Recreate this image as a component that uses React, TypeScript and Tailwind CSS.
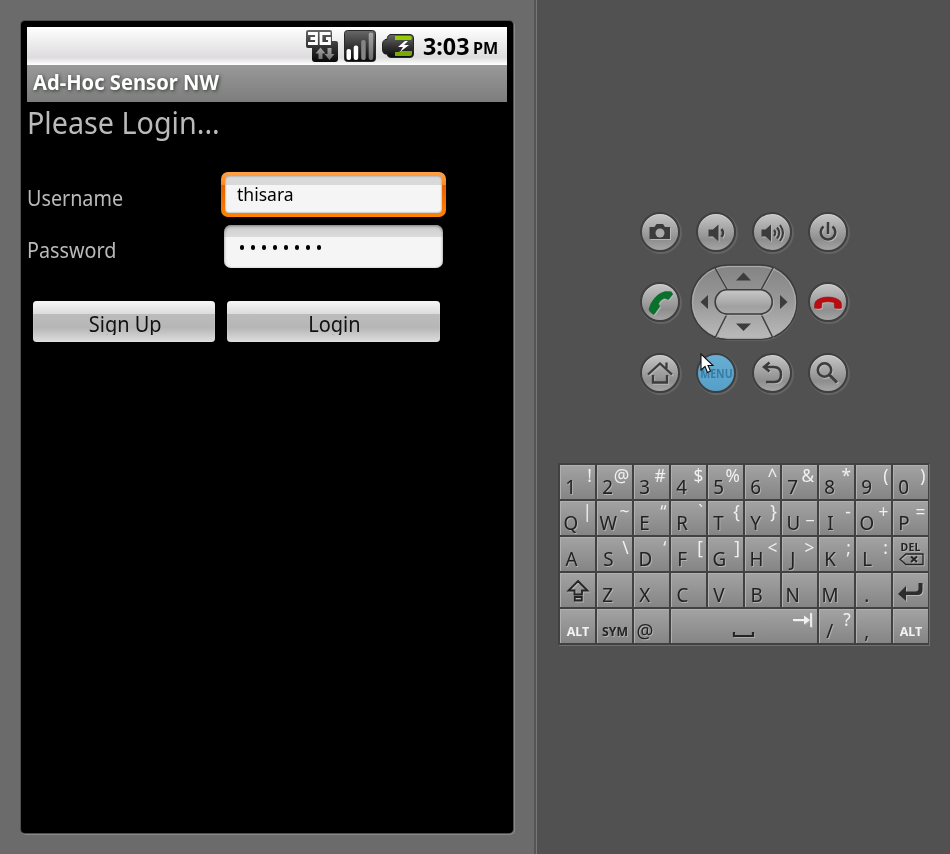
import type { ReactNode } from "react";

const RIGHT_SHADOW = "drop-shadow-[1px_1px_0_#b5b5b5]";

function StatusIcons() {
  return (
    <svg width="110" height="38" viewBox="305 27 110 38" aria-hidden="true">
      <defs>
        <linearGradient id="dark" x1="0" y1="0" x2="0" y2="1">
          <stop offset="0" stopColor="#686868" />
          <stop offset="0.5" stopColor="#353535" />
          <stop offset="1" stopColor="#080808" />
        </linearGradient>
        <linearGradient id="grey" x1="0" y1="0" x2="0" y2="1">
          <stop offset="0" stopColor="#a8a8a8" />
          <stop offset="1" stopColor="#6c6c6c" />
        </linearGradient>
      </defs>
      <path d="M308 30h22q2 0 2 2v9h4q2 0 2 2v16q0 3-3 3h-20q-3 0-3-3v-11h-4q-2 0-2-2v-14q0-2 2-2z" fill="url(#dark)" />
      <path d="M308 33.500h8.500v10h-8.500M310.500 38.500h6M330.500 33.500h-9.500v10h8.500v-5h-3.500" fill="none" stroke="#fff" strokeWidth="2.800" />
      <path d="M320.500 47.500l5 6h-3v5.500h-4v-5.500h-3zM329.500 60l-5-6h3v-6h4v6h3z" fill="url(#grey)" />
      <rect x="344.500" y="30.500" width="31" height="31" rx="3" fill="url(#dark)" stroke="#292929" />
      <rect x="346.500" y="49" width="4.500" height="11" rx="2" fill="#fff" />
      <rect x="353.700" y="45.500" width="4.500" height="14.500" rx="2" fill="#fff" />
      <rect x="361.200" y="40" width="4.500" height="20" rx="2" fill="#858585" />
      <rect x="368.700" y="32.500" width="4.500" height="27.500" rx="2" fill="url(#grey)" />
      <path d="M391 34.500h19q3.500 0 3.500 3.500v16q0 3.500-3.500 3.500h-19q-3.500 0-4-3.500h-2q-2.500-1-2.500-4v-6q0-3 2.500-4.500h2q.5-5 4-5z" fill="url(#dark)" stroke="#252525" />
      <path d="M395 52h3l3-1h11v3q0 2-2 2h-15z" fill="#7ba800" />
      <path d="M395 36h15q2 0 2 2l-1 2h-16z" fill="#93cc00" />
      <path d="M405 41l-7 6h5l-3 5 9-7h-5l4-4z" fill="#fff" />
    </svg>
  );
}

function RoundButton({ label, blue = false, children }: { label: string; blue?: boolean; children: ReactNode }) {
  return (
    <button
      aria-label={label}
      className={`flex size-[40px] items-center justify-center rounded-full border-2 border-[#3f3f3f] pt-px shadow-[1px_1px_0_1px_#646464] ${
        blue ? "bg-linear-to-b from-[#69afd4] to-[#559fc8]" : "bg-linear-to-b from-[#c6c6c6] via-[#8e8e8e] via-72% to-[#a6a6a6] inset-shadow-[0_1px_0_#d5d5d5]"
      }`}
    >
      {children}
    </button>
  );
}

function Glyph({ children }: { children: ReactNode }) {
  return (
    <svg width="36" height="36" viewBox="0 0 36 36" fill="none" stroke="#3c3c3c" strokeWidth="2.500" className="shrink-0 drop-shadow-[1px_1px_0_#b8b8b8]">
      {children}
    </svg>
  );
}

function DPad() {
  return (
    <svg width="110" height="78" viewBox="689 263 110 78" className="-mx-[1px]" aria-label="Directional pad">
      <defs>
        <linearGradient id="pad" x1="0" y1="0" x2="0" y2="1">
          <stop offset="0" stopColor="#838383" />
          <stop offset="0.500" stopColor="#999" />
          <stop offset="1" stopColor="#bbb" />
        </linearGradient>
        <linearGradient id="ok" x1="0" y1="0" x2="0" y2="1">
          <stop offset="0" stopColor="#c8c8c8" />
          <stop offset="0.700" stopColor="#a0a0a0" />
          <stop offset="1" stopColor="#aaa" />
        </linearGradient>
      </defs>
      <rect x="692" y="266" width="106" height="75" rx="37.500" fill="#6d6d6d" />
      <rect x="691" y="265" width="106" height="74.500" rx="37" fill="url(#pad)" stroke="#3c3c3c" strokeWidth="1.600" />
      <rect x="692.600" y="266.600" width="102.800" height="71.300" rx="35.500" fill="none" stroke="#b0b0b0" />
      <path d="M715.500 268l13 22M774.500 268l-12.500 22M716.500 338l12.500-22M773.500 338l-12.500-22" stroke="#b0b0b0" />
      <path d="M714.500 267l13 23M773.500 267l-12.500 23M715 338l12-24M773 338l-12-24" stroke="#404040" strokeWidth="1.500" />
      <rect x="715.500" y="290.300" width="58" height="25" rx="12" fill="none" stroke="#b5b5b5" />
      <rect x="715.200" y="289.800" width="57" height="24.200" rx="12" fill="url(#ok)" stroke="#3c3c3c" strokeWidth="1.600" />
      <path d="M736 280.500h15l-7.500-8zM736 323.500h15l-7.500 7.500zM708 295v14l-7.500-7zM780 295v14l7.500-7z" fill="#3c3c3c" />
    </svg>
  );
}

const ROWS: [string, string][][] = [
  [["1", "!"], ["2", "@"], ["3", "#"], ["4", "$"], ["5", "%"], ["6", "^"], ["7", "&"], ["8", "*"], ["9", "("], ["0", ")"]],
  [["Q", "|"], ["W", "~"], ["E", "“"], ["R", "`"], ["T", "{"], ["Y", "}"], ["U", "_"], ["I", "-"], ["O", "+"], ["P", "="]],
  [["A", ""], ["S", "\\"], ["D", "‘"], ["F", "["], ["G", "]"], ["H", "<"], ["J", ">"], ["K", ";"], ["L", ":"], ["del", ""]],
  [["shift", ""], ["Z", ""], ["X", ""], ["C", ""], ["V", ""], ["B", ""], ["N", ""], ["M", ""], [".", ""], ["enter", ""]],
  [["ALT", ""], ["SYM", ""], ["@", ""], ["space", ""], ["/", "?"], [",", ""], ["ALT", ""]],
];

function KeyFace({ main, alt }: { main: string; alt: string }) {
  const ink = "stroke-[#242424]";
  if (main === "ALT")
    return <span className="mt-[14px] block scale-x-[0.96] pl-px text-center text-[13px] leading-4 font-bold text-[#f2f2f2]">ALT</span>;
  if (main === "SYM")
    return <span className="mt-[14px] block scale-x-[0.94] pl-[1px] text-center text-[13px] leading-4 font-bold text-[#242424] [text-shadow:1px_1px_0_#b0b0b0]">SYM</span>;
  if (main === "del")
    return (
      <div className={`flex flex-col items-center pl-px ${RIGHT_SHADOW}`}>
        <span className="mt-[4px] scale-x-[0.95] text-[11px] leading-3 font-bold tracking-[0.300px] text-[#242424]">DEL</span>
        <svg width="25" height="13" viewBox="0 0 25 13" fill="none" strokeWidth="1.300" className={ink}>
          <path d="M7 1h17v10.500h-17l-6-5.200z" />
          <path d="M12 3.500l6 5.500M18 3.500l-6 5.500" strokeWidth="1.900" />
        </svg>
      </div>
    );
  if (main === "shift")
    return (
      <svg width="35" height="34" fill="none" strokeWidth="1.800" className={`${ink} ${RIGHT_SHADOW}`}>
        <path d="M18 8l9.500 9.500h-5.500v4h-7.500v-4h-6zM14.800 24h7v3.500h-7z" />
      </svg>
    );
  if (main === "enter")
    return (
      <svg width="35" height="34" className={`fill-[#2d2d2d] ${RIGHT_SHADOW}`}>
        <path d="M5 21l8-8v5.500h9.500q3 0 3-3v-5.500h4v7q0 5-5 5h-11.500v6z" />
      </svg>
    );
  if (main === "space")
    return (
      <svg width="146" height="34" fill="none" className="drop-shadow-[1px_1px_0_#aaa]">
        <path d="M63 23v4h19v-4" stroke="#242424" strokeWidth="2.200" />
        <path d="M122 11h13M140 4v14" stroke="#f2f2f2" strokeWidth="1.800" />
        <path d="M133 6.500l6 4.500-6 4.500z" fill="#f2f2f2" />
      </svg>
    );
  return (
    <div className="grid h-full">
      <span className="flex w-[22px] justify-center pt-[12px] text-[20px] leading-5 text-[#222] [grid-area:1/1] [text-shadow:1px_1px_0_#b0b0b0]">
        <span className="inline-block scale-x-[0.94]">{main}</span>
      </span>
      <span className="pt-[1px] pr-[3px] text-right text-[18px] leading-[18px] text-[#f0f0f0] [grid-area:1/1]">
        <span className="inline-block origin-right scale-x-[0.96]">{alt}</span>
      </span>
    </div>
  );
}

function Keyboard() {
  return (
    <div className="grid w-[371px] grid-cols-[repeat(10,35px)] gap-[2px] border-2 border-r-[1px] border-[#414141] bg-[#414141] shadow-[1px_1px_0_#707070]">
      {ROWS.flatMap((row, r) =>
        row.map(([main, alt], c) => (
          <div
            key={`${r}-${c}`}
            className={`flow-root h-[34px] bg-linear-to-b from-[#a3a3a3] to-[#858585] inset-shadow-[1px_1px_0_#b0b0b0] ${main === "space" ? "col-span-4" : ""}`}
          >
            <KeyFace main={main} alt={alt} />
          </div>
        )),
      )}
    </div>
  );
}

export default function App() {
  return (
    <div className="relative flex h-[854px] w-[950px] overflow-hidden bg-[#6b6b6b] font-['Noto_Sans','Open_Sans',sans-serif]">
      <section className="w-[536px] shrink-0 pt-[21px] pl-[21px]">
        <div className="h-[812px] w-[492px] rounded-[4px] bg-black p-[6px] shadow-[0_0_0_1px_#505050,1px_1px_0_1px_#898989]">
          <header className="flex h-[38px] bg-linear-to-b from-white via-[#dedcde] via-80% to-white text-black">
            <div className="ml-[278px] w-[118px] shrink-0">
              <StatusIcons />
            </div>
            <span className="w-[50px] origin-left scale-x-[0.97] pt-[4px] text-[24px] leading-[29px] font-bold">3:03</span>
            <span className="origin-left scale-x-[1.01] pt-[7px] text-[16px] leading-[29px] font-bold">PM</span>
          </header>
          <div className="h-[37px] bg-linear-to-b from-[#999] to-[#7d7d7d] pt-[3px] pl-[6px]">
            <h1 className="inline-block origin-left scale-x-[0.96] text-[21px] leading-[28px] font-bold whitespace-nowrap text-white [text-shadow:1px_1px_4px_#303830]">
              Ad-Hoc Sensor NW
            </h1>
          </div>
          <main className="text-[#bababa]">
            <h2 className="h-[70px] origin-left scale-x-[0.957] pt-[1px] text-[30px] leading-[40px] whitespace-nowrap">Please Login...</h2>
            <div className="flex h-[53px]">
              <label className="w-[194px] origin-left scale-x-[0.940] pt-[12px] text-[21px] leading-[28px]">Username</label>
              <div className="h-[45px] w-[225px] rounded-[7px] bg-[linear-gradient(#ffa24a,#ff8a1c_28%,#ea6000_30%,#ff8200)] p-1">
                <div className="h-full rounded-[4px] bg-[linear-gradient(#d9d9d9_24%,#f5f5f5_24%)] pt-[6px] pl-[12px] text-[18px] leading-6 text-black inset-shadow-[0_0_2px_#777]">
                  <span className="inline-block origin-left scale-x-[0.975]">thisara</span>
                </div>
              </div>
            </div>
            <div className="flex h-[76px]">
              <label className="w-[197px] origin-left scale-x-[0.940] pt-[11px] text-[21px] leading-[28px]">Password</label>
              <div className="flex h-[43px] w-[219px] items-center gap-[7px] rounded-[7px] bg-[linear-gradient(#ccc,#dcdcdc_27%,#f5f5f5_27%)] pl-[16px] text-black inset-shadow-[0_1px_3px_#777]">
                {Array.from({ length: 8 }, (_, i) => (
                  <span key={i} className="mt-[2px] h-[5px] w-[4px] rounded-full bg-black" />
                ))}
              </div>
            </div>
            <div className="flex gap-[12px] pl-[6px] text-[21px] leading-[28px] text-[#111]">
              {[["Sign Up", "w-[182px]"], ["Login", "w-[213px]"]].map(([text, width]) => (
                <button
                  key={text}
                  className={`${width} flex h-[41px] justify-center rounded-[4px] bg-[linear-gradient(#f7f7f7,#dcdcdc_31%,#bcbcbc_32%,#b6b6b6_65%,#dedede)] inset-shadow-[0_0_1px_#fff]`}
                >
                  <span className="mt-[9px] block h-[25px] scale-x-[0.95] overflow-hidden pl-[2px]">{text}</span>
                </button>
              ))}
            </div>
          </main>
        </div>
      </section>
      <aside className="flex grow flex-col border-l border-[#777] bg-[#515151] pt-[212px] shadow-[-2px_0_0_#555]">
        <div className="ml-[103px] flex w-[208px] flex-col">
          <div className="flex h-[51px] justify-between">
            <RoundButton label="Camera">
              <Glyph>
                <path d="M7.500 12h5l2-3h6.500l2 3h5v12h-20.500z" fill="#3c3c3c" stroke="none" />
                <circle cx="18" cy="18" r="4.500" fill="#aaa" stroke="none" />
              </Glyph>
            </RoundButton>
            <RoundButton label="Volume down">
              <Glyph>
                <path d="M10.500 14.500h4.500l5.500-5v17l-5.500-5h-4.500z" fill="#3c3c3c" stroke="none" />
                <path d="M23.500 14q3 4 0 8" />
              </Glyph>
            </RoundButton>
            <RoundButton label="Volume up">
              <Glyph>
                <path d="M7.500 14.500h4l5.500-5v17l-5.500-5h-4z" fill="#3c3c3c" stroke="none" />
                <path d="M20 15q2.500 3 0 6M23 12.500q4.500 5.500 0 11M26 10q6 8 0 16" strokeWidth="2" />
              </Glyph>
            </RoundButton>
            <RoundButton label="Power">
              <Glyph>
                <path d="M18 7v12M13.500 11.500a7.300 7.300 0 1 0 9 0" />
              </Glyph>
            </RoundButton>
          </div>
          <div className="flex h-[90px] items-start justify-between">
            <div className="pt-[19px]">
              <RoundButton label="Call">
                <Glyph>
                  <path d="M8.500 27.200L7 24.800Q8 18 13.500 12.200 18 7.500 23.500 6.500l5.700.3 1.600 2.400-4.300 5.300-4-1.300q-4 1-6 5.600l1.300 2.700-6 8.300z" fill="#08712b" stroke="#085c28" strokeWidth="0.500" />
                </Glyph>
              </RoundButton>
            </div>
            <DPad />
            <div className="pt-[19px]">
              <RoundButton label="End call">
                <Glyph>
                  <path d="M4.500 23q-.5-4 1-6.500 4-4.500 12.500-4.500t12.700 4.500q1.600 2.500 1 6.500-3 1.200-7 0l-.7-5.500q-6-1.500-12 0l-.6 5.500q-4 1.200-6.900 0z" fill="#b90b10" stroke="#8f1015" strokeWidth="0.500" />
                </Glyph>
              </RoundButton>
            </div>
          </div>
          <div className="flex justify-between">
            <RoundButton label="Home">
              <Glyph>
                <path d="M6 18.500l12-11 12 11M24.500 12.500v-6M11 19v7.500h14v-7.500" strokeWidth="2.300" />
              </Glyph>
            </RoundButton>
            <RoundButton label="Menu" blue>
              <span className="scale-x-[0.880] text-[12px] font-bold text-[#347ca3]">MENU</span>
            </RoundButton>
            <RoundButton label="Back">
              <Glyph>
                <path d="M15.500 6.500l-5.500 4.500 5.500 4.500M10 11h9.500q7.500 0 7.500 7.500t-6.500 7.500h-8.500" />
              </Glyph>
            </RoundButton>
            <RoundButton label="Search">
              <Glyph>
                <circle cx="14.500" cy="14" r="6.700" />
                <path d="M19.500 19l7.500 7.500" strokeWidth="3" />
              </Glyph>
            </RoundButton>
          </div>
        </div>
        <div className="mt-[70px] ml-[21px]">
          <Keyboard />
        </div>
      </aside>
      <svg className="absolute top-[353px] left-[700px]" width="15" height="22" viewBox="0 0 15 22" aria-hidden="true">
        <path d="M1 1v16l4-3.500 2.500 6 3-1.500-2.500-5.500h5z" fill="#fff" stroke="#111" strokeWidth="1.100" />
      </svg>
    </div>
  );
}
